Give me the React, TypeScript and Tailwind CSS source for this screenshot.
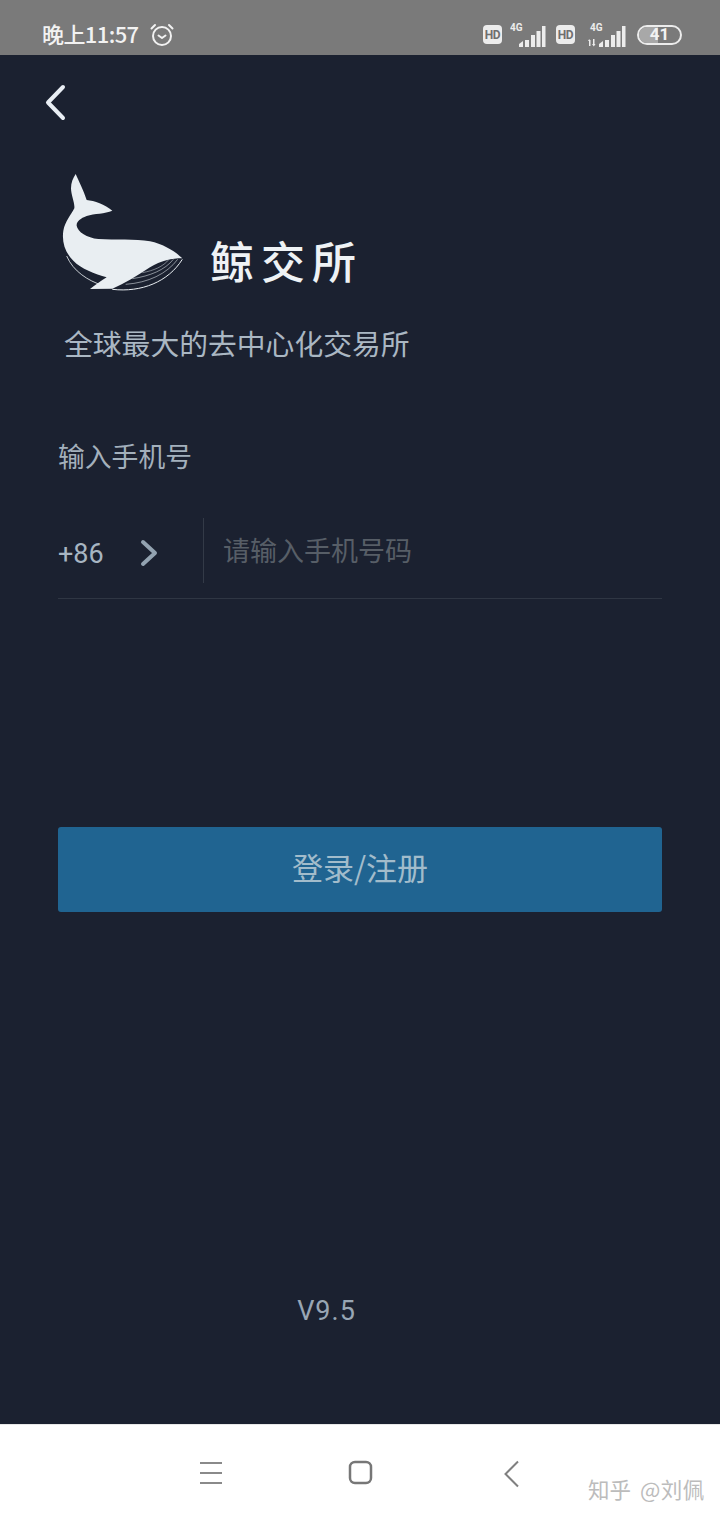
const cjk = { fontFamily: '"Noto Sans CJK SC", "Noto Sans", sans-serif' }

function Signal({ arrows }: { arrows?: boolean }) {
  return (
    <svg width={arrows ? 38 : 36} height="26" viewBox={arrows ? "-2 0 38 26" : "0 0 36 26"} fill="#ececec">
      <text x="0" y="9" fontSize="10" fontWeight="700" fontFamily="Roboto, sans-serif">4G</text>
      {arrows && <path d="M-1 18h1.500v6H-1zM-2 19l1.200-2 1.200 2zM3 17h1.500v6H3zM2 22h3.500l-1.700 2.500z" />}
      <path d="M9 22l4-3v6H9zM15 18h4v7h-4zM21 13h4v12h-4zM26.500 9h4v16h-4zM32 4h3.500v21H32z" />
    </svg>
  )
}

function Hd() {
  return (
    <div className="flex h-[19px] w-[19px] items-center justify-center rounded-[4px] bg-[#ececec] font-['Roboto'] text-[12px] font-bold tracking-[-0.5px] text-[#6f6f6f]">
      HD
    </div>
  )
}

function Whale() {
  return (
    <svg width="135" height="125" viewBox="0 0 405 375" fill="none">
      <path
        fill="#e9eef2"
        d="M62 12C70 30 86 62 95 90C118 92 150 104 172 122C150 132 118 130 95 138C76 145 64 155 65 167C68 186 96 203 130 207C180 210 240 206 285 214C325 222 360 244 382 265C350 265 318 272 285 292C245 318 210 340 172 356L105 357C120 345 138 333 155 322C120 312 78 296 55 272C30 248 20 215 25 182C30 155 48 135 58 115C60 100 48 75 48 55C48 38 54 24 62 12Z"
      />
      <path stroke="#e9eef2" strokeWidth="2.500" d="M35 258C55 305 100 332 142 346" />
      <path stroke="#e9eef2" strokeWidth="3" d="M172 358C260 368 340 335 382 268" />
      <path stroke="#d5dbe0" strokeWidth="1.800" d="M212 343C280 338 335 312 368 268" />
      <path stroke="#d5dbe0" strokeWidth="1.800" d="M232 326C285 318 330 300 355 268" />
      <path stroke="#d5dbe0" strokeWidth="1.500" d="M262 308C295 302 325 290 342 268" />
    </svg>
  )
}

export default function App() {
  return (
    <div className="relative flex h-[1520px] w-[720px] flex-col overflow-hidden bg-white" style={cjk}>
      <div className="flex h-[55px] items-center justify-between bg-[#7a7a7a] pl-[42px] pr-[38px] pt-[14px]">
        <div className="flex items-center gap-[11px]">
          <span className="-mt-[2px] w-[96px] whitespace-nowrap text-[22px] font-medium tracking-[-0.6px] text-[#f2f2f2]">晚上11:57</span>
          <svg width="26" height="26" viewBox="0 0 26 26" fill="none" stroke="#f2f2f2" strokeWidth="2" strokeLinecap="round" strokeLinejoin="round">
            <circle cx="13" cy="14" r="9" />
            <path d="M9.500 13.500l3.500 2.500 3.500-2.500M2.500 6.500L6 3M23.500 6.500L20 3" />
          </svg>
        </div>
        <div className="flex items-center">
          <Hd />
          <div className="ml-[8px]"><Signal /></div>
          <div className="ml-[10px]"><Hd /></div>
          <div className="ml-[13px]"><Signal arrows /></div>
          <div className="relative ml-[11px] flex h-[20px] w-[45px] items-center justify-center overflow-hidden rounded-full border-2 border-[#ececec]">
            <div className="absolute bottom-0 left-0 top-0 w-[19px] bg-[#a8a8a8]" />
            <span className="relative font-['Roboto'] text-[17px] font-bold text-[#f2f2f2]">41</span>
          </div>
        </div>
      </div>

      <div className="flex flex-1 flex-col bg-[#1b2130] px-[58px]">
        <svg className="-ml-[14px] mt-[29px]" width="24" height="38" viewBox="0 0 24 38" fill="none" stroke="#e9eef4" strokeWidth="4" strokeLinecap="round" strokeLinejoin="round">
          <path d="M19 3L4 18.500L19 34" />
        </svg>
        <div className="-ml-[3px] mt-[48px] flex items-end">
          <Whale />
          <span className="mb-[4px] ml-[20px] whitespace-nowrap text-[44px] font-medium leading-[62px] tracking-[7px] text-[#eef2f5]">鲸交所</span>
        </div>
        <div className="ml-[6px] mt-[27px] text-[28.800px] leading-[42px] text-[#aab7c3]">全球最大的去中心化交易所</div>
        <div className="mt-[72px] text-[26.800px] leading-[40px] text-[#a3b0bc]">输入手机号</div>
        <div className="mt-[42px] flex h-[81px] border-b border-[#2f3643]">
          <div className="flex w-[145px] items-center pb-[11px]">
            <span className="mt-[4px] font-['Roboto'] text-[27px] text-[#a7b5c2]">+86</span>
            <svg className="ml-[35px]" width="20" height="28" viewBox="0 0 20 28" fill="none" stroke="#93a3b1" strokeWidth="4" strokeLinecap="round" strokeLinejoin="round">
              <path d="M4 3L16 14L4 25" />
            </svg>
          </div>
          <div className="mb-[15px] w-px bg-[#333a47]" />
          <div className="pl-[19px] pt-[12px] text-[27px] leading-[40px] text-[#575e67]">请输入手机号码</div>
        </div>
        <div className="mt-[228px] flex h-[85px] items-center justify-center rounded-[3px] bg-[#206491] pb-[4px] text-[31px] text-[#a2bccb]">登录/注册</div>
        <div className="mt-[379px] pr-[67px] text-center font-['Roboto'] text-[27px] leading-[40px] tracking-[1px] text-[#98a6b4]">V9.5</div>
      </div>

      <div className="flex h-[96px] items-start border-t border-[#e8e8e8] pl-[199px] pt-[35px]">
        <svg width="24" height="26" viewBox="0 0 24 26" stroke="#8a8a8a" strokeWidth="2"><path d="M1 3h22M1 13h22M1 23h22" /></svg>
        <svg className="ml-[125px]" width="25" height="25" viewBox="0 0 25 25" fill="none" stroke="#777" strokeWidth="2.500"><rect x="2" y="2" width="21" height="21" rx="5" /></svg>
        <svg className="ml-[130px]" width="18" height="28" viewBox="0 0 18 28" fill="none" stroke="#808080" strokeWidth="2"><path d="M15 1.500L2.500 14L15 26.500" /></svg>
      </div>
      <div className="absolute bottom-[18px] left-[588px] flex gap-[9px] whitespace-nowrap text-[21.500px] leading-[26px] text-[#bcbcbc]">
        <span>知乎</span>
        <span className="tracking-[0.5px]">@刘佩</span>
      </div>
    </div>
  )
}
